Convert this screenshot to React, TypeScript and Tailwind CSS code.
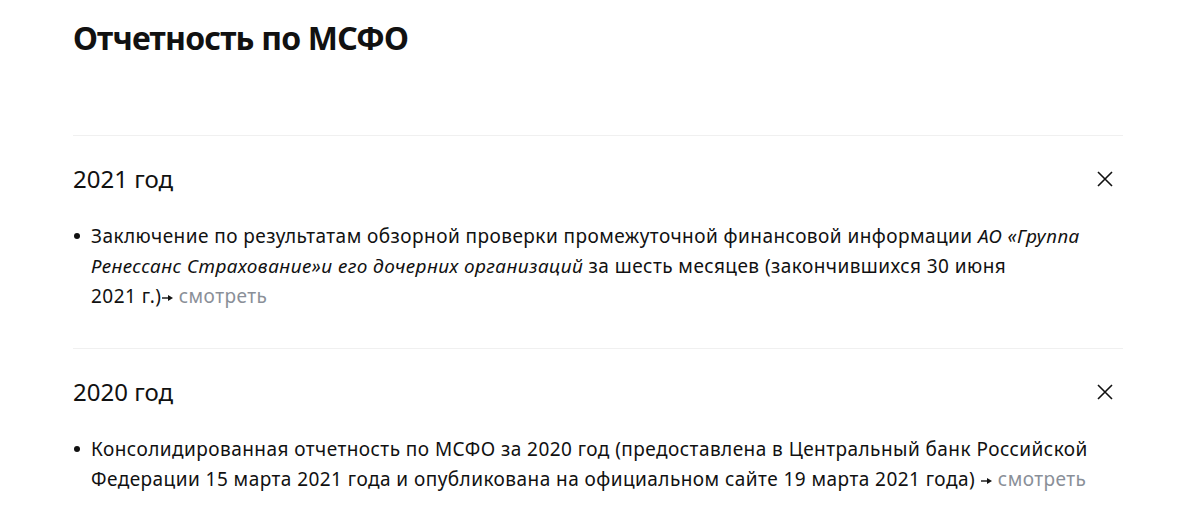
import React from "react";

type Section = {
  year: string;
  content: React.ReactNode;
};

const Close = () => (
  <svg width="18" height="18" viewBox="0 0 18 18" fill="none" stroke="#111" strokeWidth="1.6">
    <path d="M2 2 L16 16 M16 2 L2 16" />
  </svg>
);

const Arrow = () => (
  <svg width="11" height="8" viewBox="0 0 11 8" className="inline-block align-[1px] ml-[1px]">
    <path d="M0 4 H7" stroke="#111" strokeWidth="1.4" />
    <path d="M6 1 L11 4 L6 7 Z" fill="#111" />
  </svg>
);

const Link = ({ children }: { children: React.ReactNode }) => (
  <a href="#" className="text-[#8a8f98]">
    {children}
  </a>
);

const sections: Section[] = [
  {
    year: "2021 год",
    content: (
      <>
        Заключение по результатам обзорной проверки промежуточной финансовой информации{" "}
        <i>АО «Группа</i>
        <br />
        <i>Ренессанс Страхование»и его дочерних организаций</i> за шесть месяцев (закончившихся 30 июня
        <br />
        2021 г.)<Arrow /> <Link>смотреть</Link>
      </>
    ),
  },
  {
    year: "2020 год",
    content: (
      <>
        Консолидированная отчетность по МСФО за 2020 год (предоставлена в Центральный банк Российской
        <br />
        Федерации 15 марта 2021 года и опубликована на официальном сайте 19 марта 2021 года) <Arrow />{" "}
        <Link>смотреть</Link>
      </>
    ),
  },
];

export default function App() {
  return (
    <div className="w-[1200px] h-[530px] overflow-hidden bg-white text-[#111] font-['Noto_Sans',sans-serif]">
      <div className="pl-[73px] pr-[77px]">
        <h1 className="text-[32px] leading-[40px] font-bold pt-[18px] tracking-[-0.8px]">
          Отчетность по МСФО
        </h1>
        <div className="mt-[77px]">
          {sections.map((s) => (
            <div key={s.year} className="border-t border-[#f0f0f0] pt-[27px] pb-[37px]">
              <div className="flex items-center justify-between">
                <h2 className="text-[24px] leading-[32px]">{s.year}</h2>
                <div className="mr-[9px]">
                  <Close />
                </div>
              </div>
              <ul className="mt-[26px]">
                <li className="flex text-[19px] leading-[30px] tracking-[0.45px]">
                  <span className="w-[18px] shrink-0 flex pt-[12px]">
                    <span className="w-[6px] h-[6px] rounded-full bg-[#111] ml-[1px]" />
                  </span>
                  <span className="whitespace-nowrap">{s.content}</span>
                </li>
              </ul>
            </div>
          ))}
        </div>
      </div>
    </div>
  );
}
